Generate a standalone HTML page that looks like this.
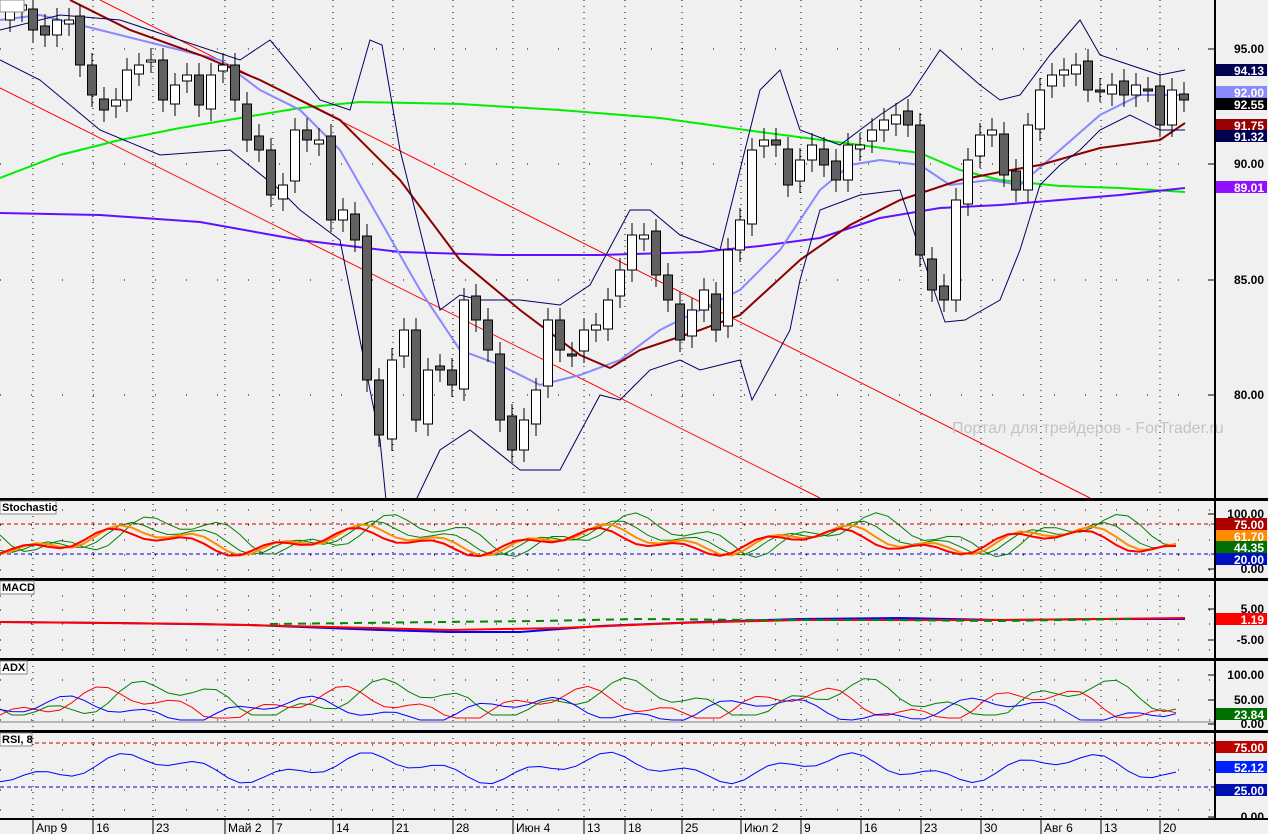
<!DOCTYPE html><html><head><meta charset="utf-8"><style>
body{margin:0;background:#f0f0f0;width:1268px;height:834px;overflow:hidden;font-family:"Liberation Sans",sans-serif}
svg{display:block}
.ax{font:bold 12px "Liberation Sans",sans-serif;fill:#000}
.lb{font:bold 12px "Liberation Sans",sans-serif;fill:#fff}
.dt{font:12px "Liberation Sans",sans-serif;fill:#000}
</style></head><body>
<svg id="s" width="1268" height="834" xmlns="http://www.w3.org/2000/svg">
<rect width="1268" height="834" fill="#f0f0f0"/>
<g id="grid"></g>
<g fill="none" stroke-width="1">
<line x1="0" y1="88" x2="820" y2="498" stroke="#f00"/>
<line x1="100" y1="0" x2="1090" y2="498" stroke="#f00"/>
<polyline stroke="#00ee00" stroke-width="2" points="0,178 60,155 120,140 180,128 240,118 300,108 360,102 460,104 560,110 660,118 760,132 860,145 920,153 960,170 1000,180 1060,186 1120,188 1185,192"/>
<polyline stroke="#6010ff" stroke-width="2" points="0,213 100,215 200,222 300,240 400,252 500,255 600,255 700,252 760,246 820,238 880,218 940,208 1000,205 1060,200 1120,195 1185,188"/>
<polyline stroke="#8888ff" stroke-width="2" points="0,20 40,15 100,30 160,45 220,60 260,90 300,110 340,150 380,220 420,290 460,350 500,365 540,385 580,375 620,360 660,330 700,310 740,290 780,250 820,190 850,165 880,160 920,165 950,185 990,180 1020,185 1060,150 1100,115 1140,95 1185,95"/>
<polyline stroke="#8b0000" stroke-width="2" points="70,0 130,30 200,55 260,80 340,120 400,180 460,260 520,310 580,355 610,368 640,350 700,330 740,315 800,260 850,225 900,200 960,180 1000,172 1040,165 1100,148 1160,140 1185,123"/>
<polyline stroke="#000060" points="0,30 60,15 120,20 180,40 240,60 270,40 320,100 350,110 370,40 382,45 400,150 440,310 460,295 480,300 520,300 560,305 590,285 630,210 650,210 680,235 720,250 760,90 780,70 800,130 840,145 880,115 910,95 940,50 980,85 1000,100 1020,95 1050,55 1080,20 1100,55 1130,65 1160,75 1185,70"/>
<polyline stroke="#000060" points="0,60 40,80 100,130 160,155 230,150 280,190 300,210 340,240 380,440 386,500 416,500 440,450 470,430 520,470 560,470 600,395 620,400 650,370 680,360 700,370 740,360 752,400 790,330 800,280 820,210 860,195 900,190 920,250 945,322 965,320 1000,300 1020,250 1040,185 1060,165 1080,150 1100,130 1130,115 1160,130 1185,130"/>
</g>
<g id="candles"></g>
<text x="952" y="433" font-size="16" fill="#c4c4c4" font-family="Liberation Sans">Портал для трейдеров - ForTrader.ru</text>
<g id="ind" fill="none"></g>
<g fill="#000">
<rect x="0" y="498" width="1268" height="3"/>
<rect x="0" y="578" width="1268" height="3"/>
<rect x="0" y="658" width="1268" height="3"/>
<rect x="0" y="730" width="1268" height="3"/>
<rect x="0" y="818" width="1268" height="2"/>
<rect x="1214" y="0" width="2" height="820"/>
</g>
<line x1="0" y1="722" x2="1214" y2="722" stroke="#808080"/>
<g font-family="Liberation Sans" font-size="11" font-weight="bold">
<rect x="0" y="501" width="56" height="13" fill="#fff" stroke="#888"/><text x="2" y="511">Stochastic</text>
<rect x="0" y="581" width="34" height="13" fill="#fff" stroke="#888"/><text x="2" y="591">MACD</text>
<rect x="0" y="661" width="27" height="13" fill="#fff" stroke="#888"/><text x="2" y="671">ADX</text>
<rect x="0" y="733" width="32" height="13" fill="#fff" stroke="#888"/><text x="2" y="743">RSI, 8</text>
<rect x="0" y="0" width="24" height="12" fill="#fff" stroke="#888"/>
</g>
<g id="axis"></g>
<g id="dates"></g>
</svg>
<script>
const NS="http://www.w3.org/2000/svg";
function el(p,t,a,txt){const e=document.createElementNS(NS,t);for(const k in a)e.setAttribute(k,a[k]);if(txt!=null)e.textContent=txt;p.appendChild(e);return e;}
const g=document.getElementById('grid');
const vx=[33,93,153,225,273,333,393,453,513,584,625,682,741,801,861,921,981,1041,1101,1160];
vx.forEach(x=>el(g,'line',{x1:x,y1:0,x2:x,y2:818,stroke:'#000','stroke-dasharray':'1,5'}));
[49,164,280,395].forEach(y=>el(g,'line',{x1:0,y1:y,x2:1214,y2:y,stroke:'#000','stroke-dasharray':'1,30'}));
[510,525,540,555,570,596,610,624,640,650,680,700,720,745,770,790,810].forEach(y=>el(g,'line',{x1:0,y1:y,x2:1214,y2:y,stroke:'#000','stroke-dasharray':'1,30'}));
const cl=[[10,10],[22,5],[33,30],[45,35],[57,20],[69,20],[80,65],[92,95],[104,110],[116,100],[127,70],[139,65],[151,60],[163,100],[175,85],[187,75],[199,105],[211,75],[223,65],[235,100],[247,140],[259,150],[271,195],[283,185],[295,130],[307,140],[319,140],[331,220],[343,210],[355,240],[367,380],[379,435],[392,360],[404,330],[416,420],[428,370],[440,370],[452,385],[464,300],[476,320],[488,350],[500,420],[512,450],[524,420],[536,390],[548,320],[560,350],[572,355],[584,330],[596,325],[608,300],[620,270],[632,235],[644,235],[656,275],[668,300],[680,340],[692,310],[704,290],[716,330],[728,250],[740,220],[752,150],[764,140],[776,145],[788,185],[800,160],[812,145],[824,165],[836,180],[848,145],[860,145],[872,130],[884,120],[896,115],[908,125],[920,255],[932,290],[944,300],[956,200],[968,160],[980,135],[992,130],[1004,175],[1016,190],[1028,125],[1040,90],[1052,75],[1064,70],[1076,65],[1088,90],[1100,90],[1112,85],[1124,95],[1136,85],[1148,90],[1160,125],[1172,90],[1184,100]];
const cg=document.getElementById('candles');
for(let i=0;i<cl.length;i++){const[x,c]=cl[i];const o=i?cl[i-1][1]+((i%3)-1)*4:20;const t=Math.min(o,c),b=Math.max(o,c);
el(cg,'line',{x1:x,y1:t-12,x2:x,y2:b+12,stroke:'#000'});
el(cg,'rect',{x:x-4.5,y:t,width:9,height:Math.max(b-t,2),fill:c<o?'#fff':'#606060',stroke:'#000'});}
const ind=document.getElementById('ind');
function wave(y0,amp,seed,col,w,yl,yh){let p=[];for(let x=0;x<=1185;x+=12){let y=y0+amp*Math.sin(x/37+seed)+amp*0.6*Math.sin(x/13+seed*2);y=Math.max(yl,Math.min(yh,y));p.push(x+','+y.toFixed(1));}el(ind,'polyline',{points:p.join(' '),stroke:col,'stroke-width':w});}
el(ind,'line',{x1:0,y1:524,x2:1214,y2:524,stroke:'#c00','stroke-dasharray':'4,3'});
el(ind,'line',{x1:0,y1:554,x2:1214,y2:554,stroke:'#00c','stroke-dasharray':'4,3'});
wave(535,14,0,'#008000',1,512,565);wave(538,11,0.6,'#008000',1,512,565);wave(540,10,1.0,'#ff8c00',2,514,562);wave(542,9,1.3,'#f00',2,514,562);
el(ind,'polyline',{points:'0,622 120,623 250,625 380,630 450,632 520,632 600,626 700,622 800,619 900,618 1000,620 1100,619 1185,619',stroke:'#00f','stroke-width':2});
el(ind,'polyline',{points:'0,622 200,624 330,627 450,630 560,628 680,623 800,620 1000,620 1185,618',stroke:'#f00','stroke-width':2});
el(ind,'polyline',{points:'270,624 440,622 540,621 640,619 760,620 880,620 1000,621 1130,619',stroke:'#080','stroke-width':2,'stroke-dasharray':'8,6'});
wave(700,14,0.3,'#008000',1,672,715);wave(705,12,1.7,'#f00',1,680,718);wave(710,9,2.9,'#00f',1,688,720);
el(ind,'line',{x1:0,y1:743,x2:1214,y2:743,stroke:'#c00','stroke-dasharray':'4,3'});
el(ind,'line',{x1:0,y1:787,x2:1214,y2:787,stroke:'#00c','stroke-dasharray':'4,3'});
wave(768,10,0.9,'#00f',1,744,798);
const ax=document.getElementById('axis');
[[49,'95.00'],[164,'90.00'],[280,'85.00'],[395,'80.00'],[514,'100.00'],[569,'0.00'],[609,'5.00'],[640,'-5.00'],[675,'100.00'],[700,'50.00'],[724,'0.00'],[817,'0.00']].forEach(([y,t])=>{el(ax,'line',{x1:1208,y1:y,x2:1214,y2:y,stroke:'#000'});el(ax,'text',{x:1264,y:y+4,'text-anchor':'end',class:'ax'},t);});
[[70,'#000050','94.13'],[92,'#8888ff','92.00'],[104,'#000','92.55'],[125,'#900','91.75'],[136,'#000050','91.32'],[187,'#9010ff','89.01'],[524,'#a00','75.00'],[536,'#ff8c00','61.70'],[547,'#007000','44.35'],[559,'#0010c0','20.00'],[619,'#f00','1.19'],[714,'#007000','23.84'],[747,'#b00','75.00'],[767,'#0020ff','52.12'],[790,'#0010b0','25.00']].forEach(([y,c,t])=>{el(ax,'rect',{x:1216,y:y-6,width:51,height:12,fill:c});el(ax,'text',{x:1264,y:y+5,'text-anchor':'end',class:'lb'},t);});
const d=document.getElementById('dates');
el(d,'rect',{x:0,y:820,width:1268,height:14,fill:'#f0f0f0'});
const dl=['Апр 9','16','23','Май 2','7','14','21','28','Июн 4','13','18','25','Июл 2','9','16','23','30','Авг 6','13','20'];
vx.forEach((x,i)=>{el(d,'line',{x1:x,y1:820,x2:x,y2:834,stroke:'#000'});el(d,'text',{x:x+3,y:832,class:'dt'},dl[i]);});
</script>
</body></html>
